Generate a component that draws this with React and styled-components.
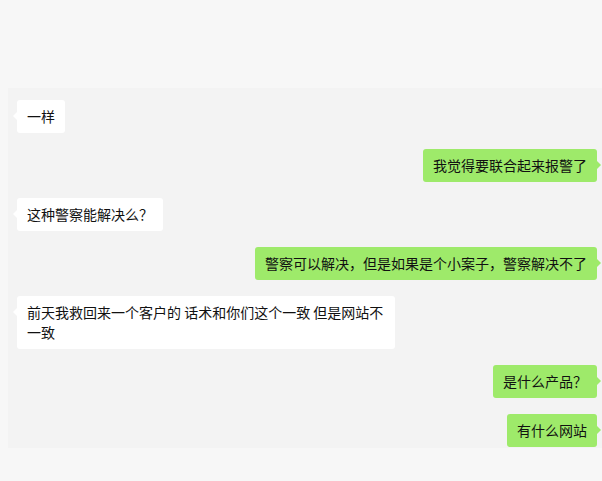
import React from "react";
import styled, { createGlobalStyle } from "styled-components";

const Global = createGlobalStyle`
  html, body {
    margin: 0;
    padding: 0;
    background: #f7f7f7;
    font-family: "Noto Sans CJK SC", "Noto Sans", sans-serif;
  }
`;

const messages = [
  { me: false, text: "一样" },
  { me: true, text: "我觉得要联合起来报警了" },
  { me: false, text: "这种警察能解决么？" },
  { me: true, text: "警察可以解决，但是如果是个小案子，警察解决不了" },
  { me: false, text: "前天我救回来一个客户的 话术和你们这个一致 但是网站不一致" },
  { me: true, text: "是什么产品？" },
  { me: true, text: "有什么网站" },
];

export default function App() {
  return (
    <>
      <Global />
      <Page>
        <Chat>
          {messages.map((m, i) => (
            <Row key={i} $me={m.me}>
              <Bubble $me={m.me}>{m.text}</Bubble>
            </Row>
          ))}
        </Chat>
      </Page>
    </>
  );
}

const Page = styled.div`
  width: 602px;
  height: 481px;
  padding: 88px 0 0 8px;
  box-sizing: border-box;
  background: #f7f7f7;
`;

const Chat = styled.div`
  background: #f3f3f3;
  height: 360px;
  box-sizing: border-box;
  padding: 12px 5px 0 9px;
  display: flex;
  flex-direction: column;
  gap: 16px;
`;

const Row = styled.div`
  display: flex;
  justify-content: ${(p) => (p.$me ? "flex-end" : "flex-start")};
`;

const Bubble = styled.div`
  position: relative;
  max-width: 358px;
  padding: 6px 10px 7px;
  border-radius: 3px;
  font-size: 14px;
  line-height: 20px;
  color: #111;
  background: ${(p) => (p.$me ? "#9eea6a" : "#ffffff")};

  &::before {
    content: "";
    position: absolute;
    top: 12px;
    ${(p) => (p.$me ? "right: -4px;" : "left: -4px;")}
    border-top: 4px solid transparent;
    border-bottom: 4px solid transparent;
    ${(p) =>
      p.$me
        ? "border-left: 4px solid #9eea6a;"
        : "border-right: 4px solid #ffffff;"}
  }
`;
